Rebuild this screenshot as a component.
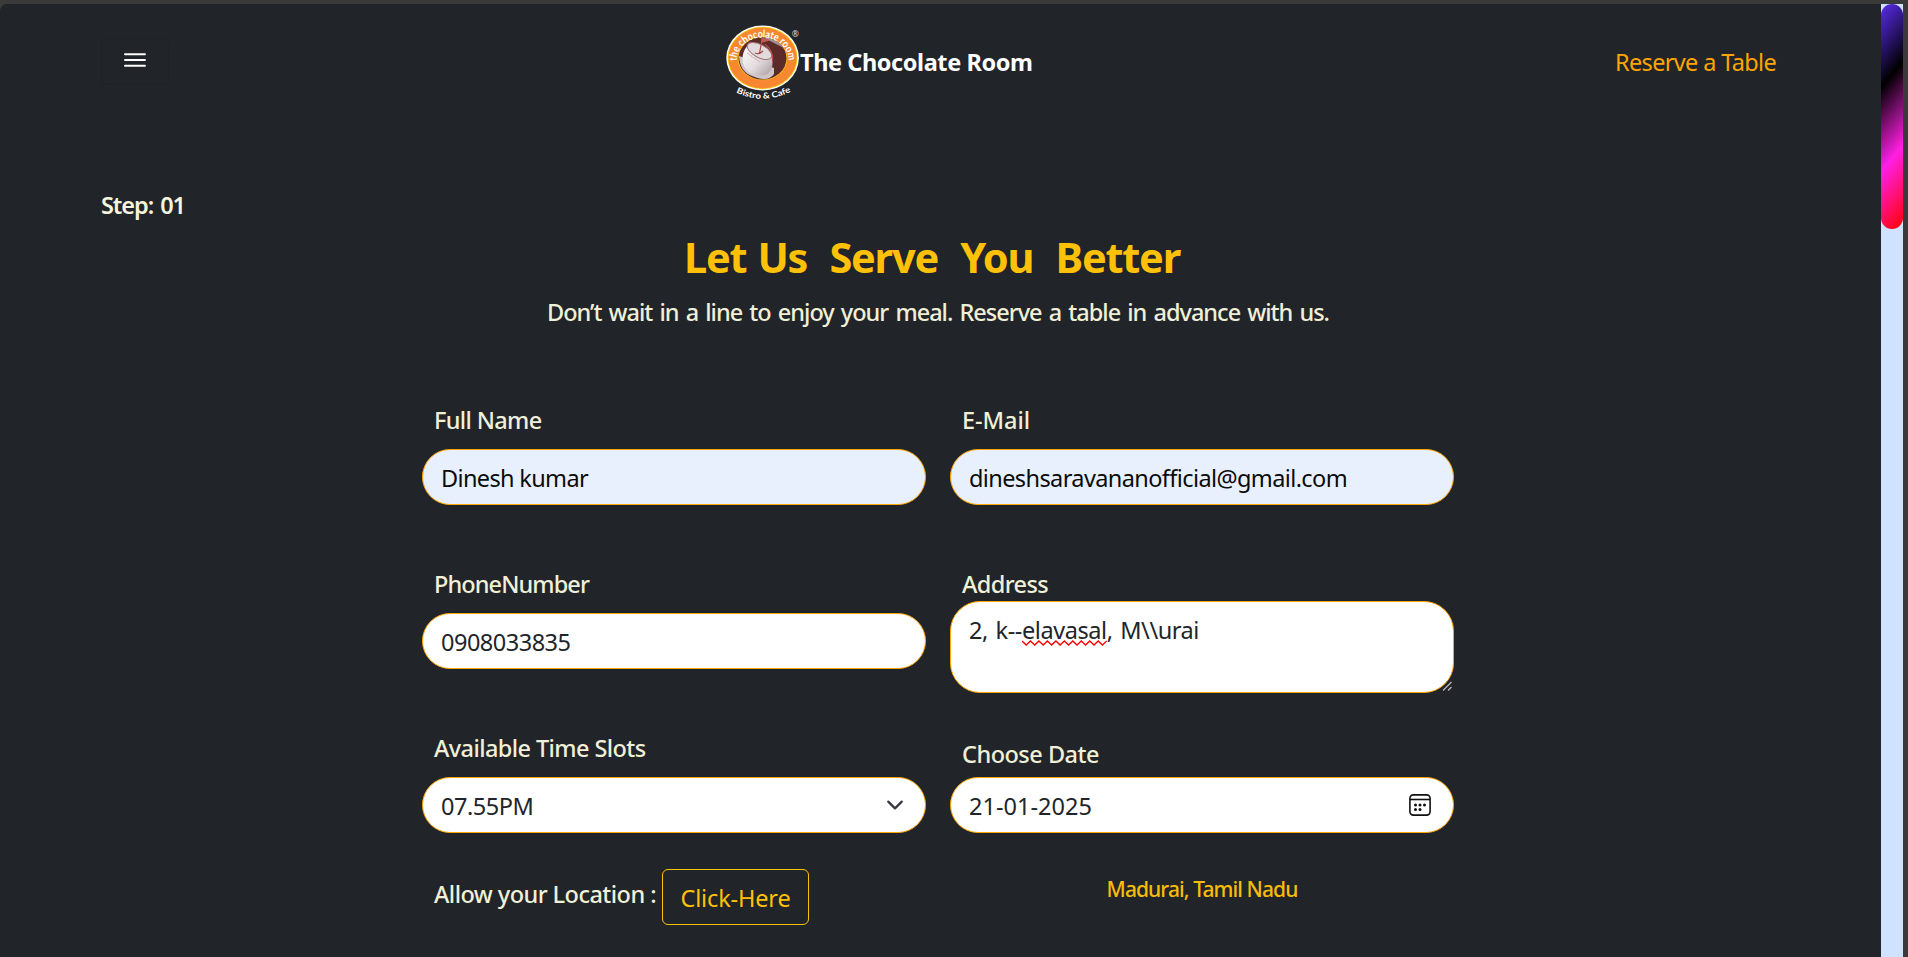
<script>
  // Spreads the letters of a text run so that it fills the given width.
  function fit(node, width) {
    const natural = node.getBoundingClientRect().width;
    const count = node.textContent.length;
    node.style.letterSpacing = `${(width - natural) / count}px`;
  }
</script>

<div class="window">
  <div class="page">
    <header>
      <button class="menu" aria-label="Menu">
        <svg width="24" height="18" viewBox="0 0 24 18" stroke="#fff" stroke-width="1.9" stroke-linecap="round">
          <path d="M2 3.200H22M2 9H22M2 14.800H22" />
        </svg>
      </button>
      <div class="brand">
        <svg class="logo" width="76" height="82" viewBox="724 20 76 82">
          <defs>
            <clipPath id="cup"><ellipse cx="762.5" cy="58.3" rx="24" ry="21.2" /></clipPath>
            <linearGradient id="china" x1="0" y1="0" x2="1" y2="1">
              <stop offset="0" stop-color="#fff" /><stop offset=".55" stop-color="#e4dcdf" /><stop offset="1" stop-color="#a99ba0" />
            </linearGradient>
            <path id="topArc" d="M736.5 61A26.1 23.6 0 0 1 788.7 61" />
            <path id="lowArc" d="M736 92.5Q763 105.5 791 91.5" />
          </defs>
          <ellipse cx="762.6" cy="58" rx="36.3" ry="32.6" fill="#fff" />
          <ellipse cx="762.6" cy="58" rx="34.9" ry="31.2" fill="#f4d314" />
          <ellipse cx="762.6" cy="58" rx="34.1" ry="30.4" fill="#f78731" />
          <ellipse cx="762.5" cy="58.3" rx="24.8" ry="21.9" fill="#f2c51a" />
          <g clip-path="url(#cup)">
            <rect x="736" y="35" width="54" height="46" fill="#5d2a2a" />
            <path d="M764 38L790 51V43L770 35Z" fill="#a78f91" />
            <path d="M739 56Q740 72 752 76Q768 83 774 74L774 68Z" fill="#cfc5c9" />
            <path d="M746.500 47C740 55 741 70 753 74.500C766 78 773 73 772.500 61C772 53 765 46 757 43.500C752 42.500 748.500 44 746.500 47Z" fill="url(#china)" />
            <ellipse cx="759.500" cy="51" rx="13.500" ry="6.500" transform="rotate(28 759.500 51)" fill="#e3dadd" stroke="#9d7778" stroke-width="1" />
            <path d="M765 44Q774 51 772.500 61" fill="none" stroke="#b14b43" stroke-width="1.200" />
            <path d="M762.500 38L759.500 53M755 53Q759 55 763 51" fill="none" stroke="#a74b48" stroke-width="1.200" />
            <path d="M761.500 37L770 40.500L761 43Z" fill="#bd5b54" />
            <path d="M747 53L760 62" stroke="#c99" stroke-width="1" stroke-dasharray="1.500 .8" />
          </g>
          <text class="ring" font-size="10.6" textLength="77" lengthAdjust="spacingAndGlyphs"><textPath href="#topArc" textLength="77" lengthAdjust="spacingAndGlyphs">the chocolate room</textPath></text>
          <text class="foot" font-size="8.4"><textPath href="#lowArc" textLength="57" lengthAdjust="spacingAndGlyphs">Bistro &amp; Cafe</textPath></text>
          <text x="791.800" y="37" font-size="8.500" fill="#ddd" font-family="Noto Sans, sans-serif">®</text>
        </svg>
        <span class="name" use:fit={232.5}>The Chocolate Room</span>
      </div>
      <a class="reserve" href="#reserve"><span use:fit={161}>Reserve a Table</span></a>
    </header>

    <main>
      <p class="step"><span use:fit={84}>Step: 01</span></p>
      <h1><span use:fit={496}>Let Us&nbsp; Serve&nbsp; You&nbsp; Better</span></h1>
      <p class="lead"><span use:fit={782}>Don’t wait in a line to enjoy your meal. Reserve a table in advance with us.</span></p>

      <div class="form">
        <div class="column">
          <div class="label"><span use:fit={107.5}>Full Name</span></div>
          <div class="field filled"><span use:fit={147}>Dinesh kumar</span></div>
          <div class="label next"><span use:fit={155}>PhoneNumber</span></div>
          <div class="field"><span use:fit={129.5}>0908033835</span></div>
          <div class="label next"><span use:fit={211.5}>Available Time Slots</span></div>
          <div class="field ends">
            <span use:fit={92.500}>07.55PM</span>
            <svg class="chevron" width="18" height="18" viewBox="0 0 16 16" fill="none" stroke="#343a40" stroke-width="2" stroke-linecap="round" stroke-linejoin="round"><path d="m2 5 6 6 6-6" /></svg>
          </div>
          <div class="location">
            <span class="ask" use:fit={222}>Allow your Location :</span>
            <button class="click"><span use:fit={110}>Click-Here</span></button>
          </div>
        </div>

        <div class="column">
          <div class="label"><span use:fit={68}>E-Mail</span></div>
          <div class="field filled"><span use:fit={378}>dineshsaravananofficial@gmail.com</span></div>
          <div class="label next tight"><span use:fit={86}>Address</span></div>
          <div class="field area">
            <span class="street" use:fit={230}>2, k--<span class="typo">elavasal<svg class="wave" viewBox="0 0 82 6" preserveAspectRatio="none" fill="none" stroke="#f00" stroke-width="1.300"><path d="M0 1L4.100 5L8.200 1L12.300 5L16.400 1L20.500 5L24.600 1L28.700 5L32.800 1L36.900 5L41 1L45.100 5L49.200 1L53.300 5L57.400 1L61.500 5L65.600 1L69.700 5L73.800 1L77.900 5L82 1" /></svg></span>, M\\urai</span>
            <svg class="grip" width="10" height="10" viewBox="0 0 10 10" stroke="#bbb" stroke-width="1.200"><path d="M1 9.500L9.500 1M6 9.500L9.500 6" /></svg>
          </div>
          <div class="label date"><span use:fit={137}>Choose Date</span></div>
          <div class="field ends">
            <span use:fit={123}>21-01-2025</span>
            <svg class="calendar" width="22" height="22" viewBox="0 0 22 22" fill="none" stroke="#111" stroke-width="1.600">
              <rect x=".900" y=".900" width="20.200" height="20.200" rx="3.500" /><path d="M1 5.500H21" />
              <g fill="#111" stroke="none"><circle cx="6.500" cy="11" r="1.500" /><circle cx="11" cy="11" r="1.500" /><circle cx="15.500" cy="11" r="1.500" /><circle cx="6.500" cy="15.500" r="1.500" /><circle cx="11" cy="15.500" r="1.500" /></g>
            </svg>
          </div>
          <div class="city"><span use:fit={191}>Madurai, Tamil Nadu</span></div>
        </div>
      </div>
    </main>
  </div>
  <div class="track"><div class="thumb"></div></div>
</div>

<style>
  :global(body) { margin: 0; background: #3b3a3a; overflow: hidden; }
  .window {
    box-sizing: border-box;
    display: flex;
    height: 957px;
    padding: 4px 5px 0 0;
    font: 400 23.5px/36px "Noto Sans", "Open Sans", sans-serif;
    color: #212529;
  }
  .page { flex: 1; background: #212429; border-top-left-radius: 7px; overflow: hidden; }
  .track { width: 22px; background: #cfe2ff; }
  .thumb { height: 225px; border-radius: 11px; background: linear-gradient(130deg, #5b2cf0, #000, #ff1fe5, #f00); }
  span { display: inline-block; white-space: pre; }
  p, h1 { margin: 0; }
  header { display: grid; grid-template-columns: 624px 1fr auto; padding: 16px 105px 0 100px; height: 116px; box-sizing: border-box; align-items: start; }
  .menu {
    display: flex; justify-content: center; align-items: center;
    width: 68px; height: 47px; margin: 18px 0 0 1px; padding: 0 0 4px;
    background: none; border: 1px solid #1e2125; border-radius: 6px;
  }
  .brand { display: flex; }
  .logo { flex: none; }
  .ring, .foot { fill: #fff; font-family: "Lato", sans-serif; font-weight: 700; }
  .name { margin: 24px 0 0; font-weight: 700; color: #fff; }
  .reserve { margin-top: 24px; color: #ffa500; text-decoration: none; }
  .step { padding: 67px 0 0 101px; font-weight: 600; color: #f5f5dc; }
  .step span { word-spacing: 2px; }
  h1 { margin-top: 4px; padding-left: 684px; font-size: 41.5px; line-height: 60px; font-weight: 700; color: #ffc107; }
  h1 span { word-spacing: 1.5px; }
  .lead { margin-top: 7px; padding-left: 547px; font-weight: 500; color: #f0f0d8; }
  .lead span { word-spacing: 2px; }
  .form { display: grid; grid-template-columns: 504px 504px; gap: 24px; margin: 72px 0 0 422px; }
  .column { display: flex; flex-direction: column; }
  .label { height: 36px; margin-bottom: 11px; padding-left: 12px; font-weight: 500; color: #f0f0d8; }
  .next { margin-top: 61px; }
  .tight { height: 35px; margin-bottom: 0; }
  .date { margin: 43px 0 5px; }
  .field {
    position: relative; box-sizing: border-box; height: 56px; padding: 10px 22px 0 18px;
    background: #fff; border: 1px solid #ffa500; border-radius: 30px;
  }
  .filled { background: #e8f0fe; color: #0b0b0b; }
  .area { height: 92px; }
  .ends { display: flex; justify-content: space-between; }
  .chevron { margin: 8px -1px 0 0; }
  .calendar { margin-top: 6px; }
  .street { word-spacing: 2px; }
  .typo { position: relative; }
  .wave { position: absolute; left: 0; top: 28px; width: 100%; height: 6px; }
  .grip { position: absolute; right: 1px; bottom: 1px; }
  .location { display: flex; margin-top: 36px; padding-left: 12px; }
  .ask { margin-top: 7px; font-weight: 500; color: #f0f0d8; }
  .click {
    box-sizing: border-box; width: 147px; height: 56px; margin-left: 6px; padding: 1px 0 0;
    font: inherit; color: #ffc107; background: none; border: 1px solid #ffc107; border-radius: 6px;
  }
  .city { margin-top: 40px; font-size: 21px; line-height: 32px; font-weight: 500; text-align: center; color: #f7bc09; }
</style>
